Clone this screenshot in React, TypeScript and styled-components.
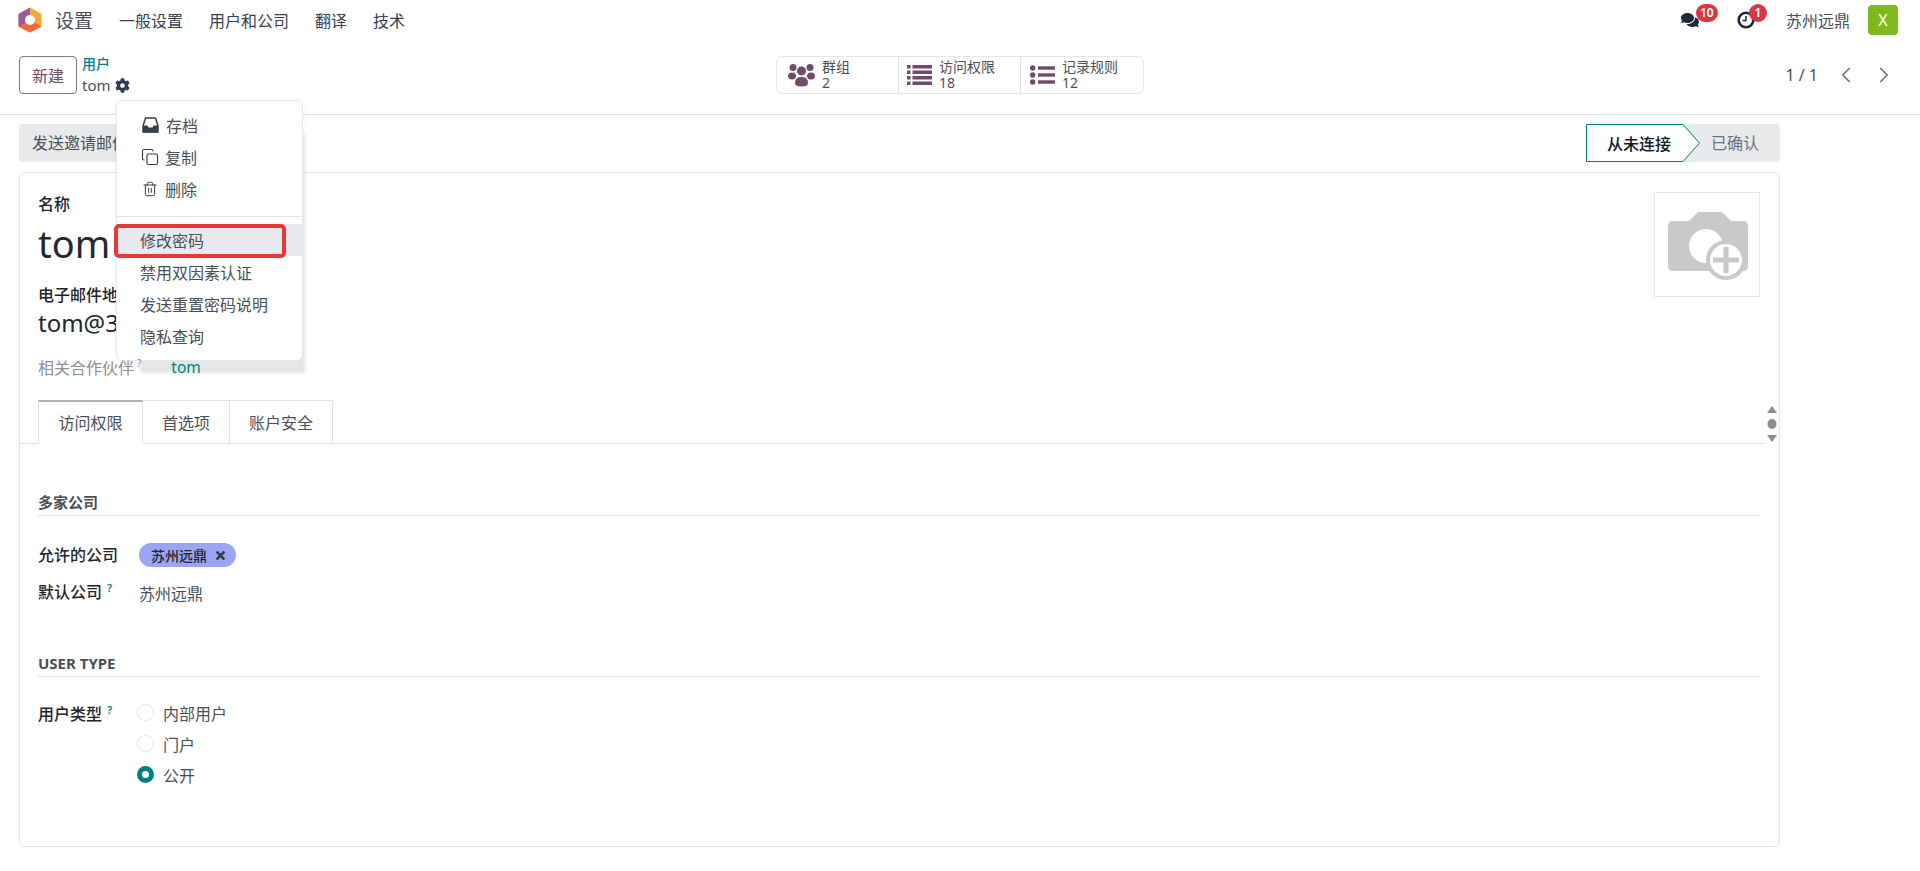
import * as React from "react"
import styled, { createGlobalStyle } from "styled-components"
import { FaCog, FaComments, FaTimes } from "react-icons/fa"
import { FiChevronLeft, FiChevronRight } from "react-icons/fi"
import { Copy, Trash2 } from "lucide-react"

const GlobalStyle = createGlobalStyle`
  html, body {
    margin: 0;
    padding: 0;
    background: #fff;
    color: #495057;
    font-family: "Noto Sans", "Noto Sans CJK SC", sans-serif;
    font-size: 16px;
  }
  * { box-sizing: border-box; }
`

const Page = styled.div`
  width: 1920px;
  height: 871px;
  overflow: hidden;
  position: relative;
`

const NavBar = styled.div`
  height: 40px;
  display: flex;
  align-items: center;
  padding: 0 22px 0 18px;
`

const AppName = styled.div`
  font-size: 19px;
  color: #495057;
  margin: 0 26px 0 13px;
`

const MenuItem = styled.div`
  font-size: 16px;
  color: #374151;
  margin-right: 26px;
`

const NavRight = styled.div`
  margin-left: auto;
  display: flex;
  align-items: center;
`

const Systray = styled.div`
  position: relative;
  display: flex;
  align-items: center;
  color: #1f2937;
  font-size: 18px;
  margin-right: ${(p: { $gap: number }) => p.$gap}px;
`

const Badge = styled.span`
  position: absolute;
  top: -7px;
  left: ${(p: { $left: number }) => p.$left}px;
  min-width: 18px;
  height: 18px;
  padding: 0 4px;
  border-radius: 9px;
  background: #dc3545;
  color: #fff;
  font-size: 12px;
  font-weight: 600;
  line-height: 18px;
  text-align: center;
`

const CompanyName = styled.div`
  font-size: 16px;
  color: #495057;
  margin-right: 18px;
`

const Avatar = styled.div`
  width: 30px;
  height: 30px;
  border-radius: 4px;
  background: #7fb91e;
  color: #fff;
  font-size: 16px;
  display: flex;
  align-items: center;
  justify-content: center;
`

const ControlPanel = styled.div`
  height: 75px;
  border-bottom: 1px solid #dee2e6;
  padding: 0 23px 4px 19px;
  display: grid;
  grid-template-columns: 1fr auto 1fr;
  align-items: center;
  position: relative;
`

const Breadcrumb = styled.div`
  display: flex;
  align-items: center;
  gap: 5px;
`

const NewButton = styled.div`
  width: 58px;
  height: 38px;
  border: 1px solid #8b7284;
  border-radius: 4px;
  color: #714b67;
  font-size: 16px;
  display: flex;
  align-items: center;
  justify-content: center;
`

const CrumbParent = styled.div`
  font-size: 14px;
  line-height: 20px;
  color: #017e84;
  font-weight: 500;
`

const CrumbCurrent = styled.div`
  font-size: 15px;
  line-height: 22px;
  color: #495057;
  display: flex;
  align-items: center;
  gap: 4px;
  svg { color: #2c3e50; font-size: 15px; }
`

const StatGroup = styled.div`
  display: flex;
  height: 38px;
  border: 1px solid #e4e6e9;
  border-radius: 6px;
  margin-left: 4px;
`

const StatButton = styled.div<{ $pad: number }>`
  width: 122px;
  display: flex;
  align-items: center;
  gap: 7px;
  padding-left: ${(p) => p.$pad}px;
  border-right: 1px solid #dee2e6;
  color: #714b67;
  svg { flex: none; }
  &:last-child { border-right: none; }
`

const StatText = styled.div`
  display: flex;
  flex-direction: column;
  font-size: 14px;
  line-height: 16px;
`

const StatTitle = styled.span`
  color: #495057;
`

const StatValue = styled.span`
  color: #5b4a5a;
`

const Pager = styled.div`
  justify-self: end;
  display: flex;
  align-items: center;
  font-size: 16px;
  color: #495057;
  svg { font-size: 26px; color: #6b7280; margin-left: 12px; stroke-width: 1.5; }
  span { margin-right: 3px; }
`

const Body = styled.div`
  padding: 9px 140px 0 19px;
`

const ActionBar = styled.div`
  height: 38px;
  display: flex;
  justify-content: space-between;
  align-items: stretch;
`

const ActionButton = styled.div`
  width: 125px;
  background: #e8eaec;
  border-radius: 4px;
  font-size: 16px;
  line-height: 38px;
  padding-left: 13px;
  color: #495057;
  white-space: nowrap;
  overflow: hidden;
`

const StatusBar = styled.div`
  display: flex;
`

const StatusCurrent = styled.div`
  width: 97px;
  background: #fff;
  border: 1px solid #017e84;
  border-right: none;
  font-size: 16px;
  font-weight: 500;
  color: #111827;
  display: flex;
  align-items: center;
  padding-left: 20px;
  white-space: nowrap;
`

const StatusArrow = styled.svg`
  display: block;
  width: 17px;
  height: 38px;
  background: #e8eaec;
`

const StatusNext = styled.div`
  width: 80px;
  background: #e8eaec;
  border-radius: 0 4px 4px 0;
  font-size: 16px;
  color: #6b7280;
  line-height: 38px;
  padding-left: 11px;
`

const Sheet = styled.div`
  position: relative;
  margin-top: 10px;
  height: 675px;
  border: 1px solid #e2e4e7;
  border-radius: 6px;
  padding: 19px 19px 0 18px;
`

const SheetHead = styled.div`
  display: flex;
  justify-content: space-between;
  height: 208px;
`

const FieldLabel = styled.div`
  font-size: 16px;
  line-height: 24px;
  color: #212529;
  font-weight: 500;
  white-space: nowrap;
`

const NameValue = styled.div`
  font-size: 38px;
  line-height: 54px;
  color: #1f2937;
  margin-bottom: 13px;
`

const EmailValue = styled.div`
  font-size: 24px;
  line-height: 32px;
  color: #212529;
  margin-bottom: 16px;
`

const PartnerRow = styled.div`
  position: relative;
  z-index: 11;
  display: flex;
  align-items: center;
  font-size: 16px;
  color: #8a8f96;
  sup { color: #8a8f96; font-size: 10px; margin: 0 0 8px 3px; }
`

const PartnerLink = styled.span`
  color: #017e84;
  font-size: 15.500px;
  margin-left: 30px;
`

const PhotoBox = styled.div`
  width: 106px;
  height: 105px;
  border: 1px solid #e5e7ea;
  display: flex;
  align-items: center;
  justify-content: center;
  padding: 2px 0 0 2px;
`

const Tabs = styled.div`
  display: flex;
  height: 44px;
  margin: 0 -5px 0 -18px;
  padding-left: 18px;
  border-bottom: 1px solid #dee2e6;
`

const Tab = styled.div<{ $active?: boolean }>`
  height: 44px;
  width: ${(p) => (p.$active ? 105 : 87)}px;
  border: 1px solid #dee2e6;
  border-left: ${(p) => (p.$active ? "1px solid #dee2e6" : "none")};
  border-top: ${(p) => (p.$active ? "2px solid #adb1b6" : "1px solid #dee2e6")};
  border-bottom: ${(p) => (p.$active ? "1px solid #fff" : "none")};
  font-size: 16px;
  color: #495057;
  display: flex;
  align-items: center;
  justify-content: center;
  padding-bottom: 2px;
  flex: none;
  &:last-child { width: 103px; }
`

const ScrollHint = styled.svg`
  position: absolute;
  right: 1px;
  top: 232px;
  width: 12px;
  height: 38px;
`

const Group = styled.section`
  margin-top: ${(p: { $top: number }) => p.$top}px;
`

const GroupTitle = styled.div`
  font-size: 15px;
  line-height: 20px;
  font-weight: 700;
  color: #495057;
  padding-bottom: 3px;
  border-bottom: 1px solid #dee2e6;
`

const FieldRow = styled.div`
  display: grid;
  grid-template-columns: 101px 1fr;
  align-items: start;
  margin-top: ${(p: { $top: number }) => p.$top}px;
  sup { color: #017e84; font-size: 11px; font-weight: 600; margin-left: 5px; vertical-align: 6px; line-height: 0; }
`

const CompanyTag = styled.div`
  width: 97px;
  height: 24px;
  border-radius: 12px;
  background: #9aa5f6;
  color: #212529;
  font-size: 14px;
  font-weight: 500;
  display: flex;
  align-items: center;
  gap: 7px;
  padding-left: 12px;
  svg { font-size: 13px; color: #343a40; }
`

const PlainValue = styled.div`
  font-size: 16px;
  line-height: 24px;
  color: #495057;
  padding-top: 2px;
`

const RadioList = styled.div`
  display: flex;
  flex-direction: column;
  margin: -5px 0 0 -2px;
`

const RadioRow = styled.div`
  height: 31px;
  display: flex;
  align-items: center;
  gap: 9px;
  font-size: 16px;
  color: #495057;
`

const RadioDot = styled.span<{ $checked?: boolean }>`
  width: 17px;
  height: 17px;
  border-radius: 50%;
  border: ${(p) => (p.$checked ? "5px solid #017e84" : "1px solid #e3e5e8")};
  background: #fff;
  flex: none;
`

const Dropdown = styled.div`
  position: absolute;
  left: 116px;
  top: 100px;
  width: 187px;
  height: 261px;
  background: #fff;
  border: 1px solid #e6e8ea;
  border-radius: 6px;
  padding: 8px 0;
  box-shadow: 13px 23px 3px -11px #e3e5e7, 0 0 6px rgba(0, 0, 0, 0.06);
  z-index: 10;
`

const DropItem = styled.div<{ $icon?: boolean; $active?: boolean }>`
  position: relative;
  height: 32px;
  display: flex;
  align-items: center;
  gap: 7px;
  padding-left: ${(p) => (p.$icon ? 25 : 23)}px;
  font-size: 16px;
  color: #495057;
  background: ${(p) => (p.$active ? "#e7e9ec" : "transparent")};
  svg { color: #343f4b; flex: none; }
  svg.lucide-copy { margin: 0 -1px; }
`

const DropDivider = styled.div`
  height: 1px;
  background: #e2e4e7;
  margin: 11px 0 7px;
`

const RedFrame = styled.span`
  position: absolute;
  left: -3px;
  top: 0;
  width: 172px;
  height: 34px;
  border: 4px solid #ea3838;
  border-radius: 5px;
`

const AppLogo: React.FC = () => (
  <svg width="24" height="26" viewBox="0 0 24 26">
    <path d="M12 0.5 L23.5 7 V19.5 L12 25.5 L0.5 19.5 V7 Z" fill="#f2a93b" />
    <path d="M12 0.5 L0.5 7 V19.5 L8 23.2 L12 13 Z" fill="#9a5b9d" />
    <path d="M12 13 L0.5 19.5 L12 25.5 L23.5 19.5 Z" fill="#f0683a" />
    <circle cx="12" cy="13" r="5" fill="#fff" />
  </svg>
)

const ClockIcon: React.FC = () => (
  <svg width="18" height="18" viewBox="0 0 18 18" fill="none" stroke="#1f2937">
    <circle cx="9" cy="9" r="7.300" strokeWidth="2.600" />
    <path d="M9 5 V9.500 H5.500" strokeWidth="1.500" />
  </svg>
)

const UsersIcon: React.FC = () => (
  <svg width="27" height="24" viewBox="0 0 27 24" fill="#714b67">
    <circle cx="5" cy="4.500" r="3.500" />
    <circle cx="22" cy="4.500" r="3.500" />
    <ellipse cx="4" cy="13" rx="4" ry="3.500" />
    <ellipse cx="23" cy="13" rx="4" ry="3.500" />
    <circle cx="13.500" cy="8" r="5" stroke="#fff" />
    <path d="M6.500 20 Q6.500 13.500 13.500 13.500 Q20.500 13.500 20.500 20 Q20.500 24 13.500 24 Q6.500 24 6.500 20 Z" stroke="#fff" />
  </svg>
)

const ListIcon: React.FC = () => (
  <svg width="25" height="20" viewBox="0 0 25 20" fill="#714b67">
    {[0, 5.500, 11, 16.500].map((y) => (
      <React.Fragment key={y}>
        <rect x="0" y={y} width="3.500" height="3.500" />
        <rect x="5.500" y={y} width="19.500" height="3.500" />
      </React.Fragment>
    ))}
  </svg>
)

const BulletsIcon: React.FC = () => (
  <svg width="25" height="20" viewBox="0 0 25 20" fill="#714b67">
    {[3, 10, 17].map((y) => (
      <React.Fragment key={y}>
        <circle cx="2.700" cy={y} r="2.700" />
        <rect x="8" y={y - 1.700} width="17" height="3.400" />
      </React.Fragment>
    ))}
  </svg>
)

const InboxIcon: React.FC = () => (
  <svg width="17" height="16" viewBox="0 0 17 16">
    <path d="M3.500 1 H13.500 L16 9 V15 H1 V9 Z" fill="none" stroke="#343f4b" strokeWidth="1.500" strokeLinejoin="round" />
    <path d="M1 8.500 H5.500 L6.500 10.500 H10.500 L11.500 8.500 H16 V15.500 H1 Z" fill="#343f4b" />
  </svg>
)

const CameraIcon: React.FC = () => (
  <svg width="82" height="72" viewBox="0 0 82 72">
    <path d="M6 11 H22 L31 2 H55 L64 11 H76 Q81 11 81 16 V56 Q81 61 76 61 H6 Q1 61 1 56 V16 Q1 11 6 11 Z" fill="#c9c9c9" />
    <circle cx="39" cy="36" r="17" fill="#fff" />
    <circle cx="59" cy="50" r="20" fill="#c9c9c9" />
    <circle cx="59" cy="50" r="16" fill="#fff" />
    <rect x="46" y="47.500" width="26" height="5" fill="#c9c9c9" />
    <rect x="56.500" y="37" width="5" height="26" fill="#c9c9c9" />
  </svg>
)

const App: React.FC = () => (
  <Page>
    <GlobalStyle />
    <NavBar>
      <AppLogo />
      <AppName>设置</AppName>
      <MenuItem>一般设置</MenuItem>
      <MenuItem>用户和公司</MenuItem>
      <MenuItem>翻译</MenuItem>
      <MenuItem>技术</MenuItem>
      <NavRight>
        <Systray $gap={38}>
          <FaComments />
          <Badge $left={15}>10</Badge>
        </Systray>
        <Systray $gap={31}>
          <ClockIcon />
          <Badge $left={12}>1</Badge>
        </Systray>
        <CompanyName>苏州远鼎</CompanyName>
        <Avatar>X</Avatar>
      </NavRight>
    </NavBar>

    <ControlPanel>
      <Breadcrumb>
        <NewButton>新建</NewButton>
        <div>
          <CrumbParent>用户</CrumbParent>
          <CrumbCurrent>
            tom <FaCog />
          </CrumbCurrent>
        </div>
      </Breadcrumb>
      <StatGroup>
        <StatButton $pad={11}>
          <UsersIcon />
          <StatText>
            <StatTitle>群组</StatTitle>
            <StatValue>2</StatValue>
          </StatText>
        </StatButton>
        <StatButton $pad={8}>
          <ListIcon />
          <StatText>
            <StatTitle>访问权限</StatTitle>
            <StatValue>18</StatValue>
          </StatText>
        </StatButton>
        <StatButton $pad={9}>
          <BulletsIcon />
          <StatText>
            <StatTitle>记录规则</StatTitle>
            <StatValue>12</StatValue>
          </StatText>
        </StatButton>
      </StatGroup>
      <Pager>
        <span>1 / 1</span>
        <FiChevronLeft />
        <FiChevronRight />
      </Pager>
    </ControlPanel>

    <Dropdown>
      <DropItem $icon>
        <InboxIcon />
        存档
      </DropItem>
      <DropItem $icon>
        <Copy size={18} strokeWidth={1.5} />
        复制
      </DropItem>
      <DropItem $icon>
        <Trash2 size={16} strokeWidth={1.5} />
        删除
      </DropItem>
      <DropDivider />
      <DropItem $active>
        修改密码
        <RedFrame />
      </DropItem>
      <DropItem>禁用双因素认证</DropItem>
      <DropItem>发送重置密码说明</DropItem>
      <DropItem>隐私查询</DropItem>
    </Dropdown>

    <Body>
      <ActionBar>
        <ActionButton>发送邀请邮件</ActionButton>
        <StatusBar>
          <StatusCurrent>从未连接</StatusCurrent>
          <StatusArrow viewBox="0 0 17 38">
            <path d="M0 0.5 L16.500 19 L0 37.500" fill="#fff" stroke="#017e84" />
          </StatusArrow>
          <StatusNext>已确认</StatusNext>
        </StatusBar>
      </ActionBar>

      <Sheet>
        <SheetHead>
          <div>
            <FieldLabel>名称</FieldLabel>
            <NameValue>tom</NameValue>
            <FieldLabel>电子邮件地址</FieldLabel>
            <EmailValue>tom@3</EmailValue>
            <PartnerRow>
              相关合作伙伴
              <sup>?</sup>
              <PartnerLink>tom</PartnerLink>
            </PartnerRow>
          </div>
          <PhotoBox>
            <CameraIcon />
          </PhotoBox>
        </SheetHead>

        <Tabs>
          <Tab $active>访问权限</Tab>
          <Tab>首选项</Tab>
          <Tab>账户安全</Tab>
        </Tabs>
        <ScrollHint viewBox="0 0 12 38">
          <path d="M6 1 L11 8 H1 Z" fill="#8a8d91" />
          <ellipse cx="6" cy="19" rx="4.500" ry="5" fill="#8a8d91" />
          <path d="M1 30 H11 L6 37 Z" fill="#8a8d91" />
        </ScrollHint>

        <Group $top={48}>
          <GroupTitle>多家公司</GroupTitle>
          <FieldRow $top={27}>
            <FieldLabel>允许的公司</FieldLabel>
            <CompanyTag>
              苏州远鼎
              <FaTimes />
            </CompanyTag>
          </FieldRow>
          <FieldRow $top={13}>
            <FieldLabel>
              默认公司<sup>?</sup>
            </FieldLabel>
            <PlainValue>苏州远鼎</PlainValue>
          </FieldRow>
        </Group>

        <Group $top={47}>
          <GroupTitle>USER TYPE</GroupTitle>
          <FieldRow $top={25}>
            <FieldLabel>
              用户类型<sup>?</sup>
            </FieldLabel>
            <RadioList>
              <RadioRow>
                <RadioDot />
                内部用户
              </RadioRow>
              <RadioRow>
                <RadioDot />
                门户
              </RadioRow>
              <RadioRow>
                <RadioDot $checked />
                公开
              </RadioRow>
            </RadioList>
          </FieldRow>
        </Group>
      </Sheet>
    </Body>
  </Page>
)

export default App
